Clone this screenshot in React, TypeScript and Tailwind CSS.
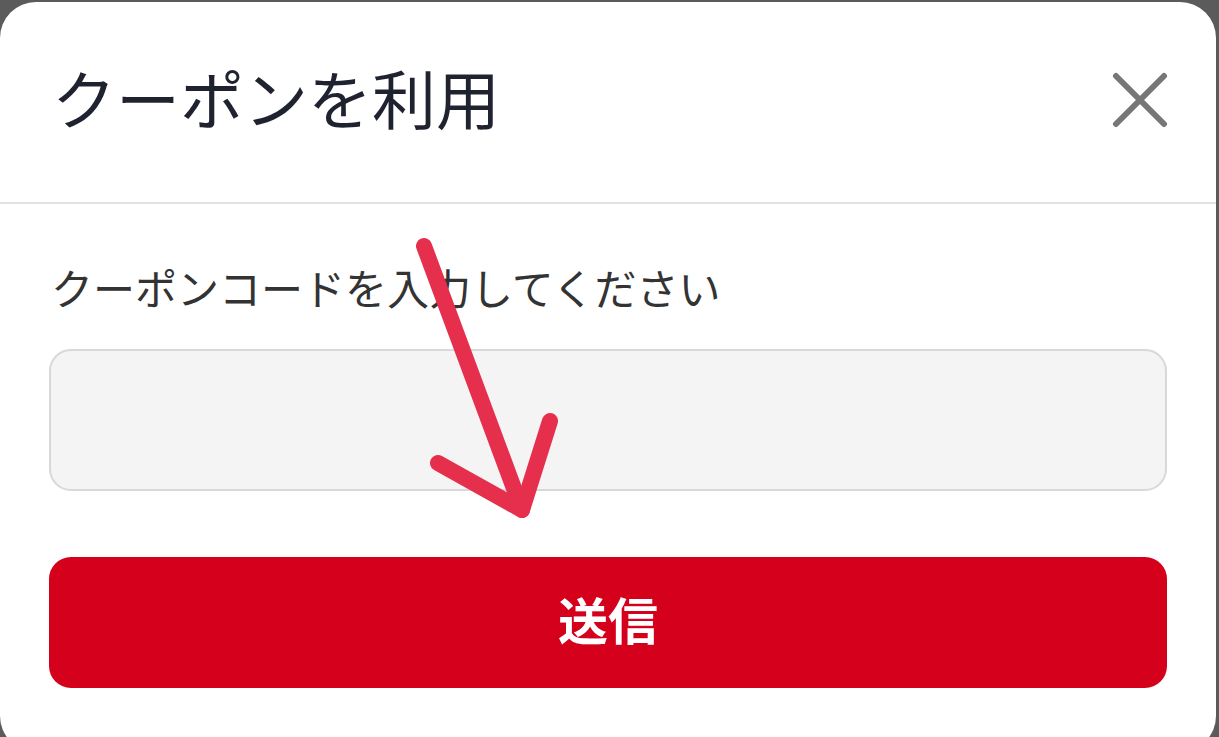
// Coupon dialog — "use coupon" sheet with an annotation arrow
import React from 'react';

const font = { fontFamily: '"Noto Sans CJK JP", "Noto Sans", sans-serif' };

const CloseIcon: React.FC = () => (
  <svg width="56" height="56" viewBox="0 0 56 56" aria-hidden="true">
    <path
      d="M4 4 L52 52 M52 4 L4 52"
      stroke="#777777"
      strokeWidth="6"
      strokeLinecap="round"
      fill="none"
    />
  </svg>
);

const Arrow: React.FC = () => (
  <svg
    className="absolute left-0 top-0 pointer-events-none"
    width="1219"
    height="737"
    viewBox="0 0 1219 737"
    aria-hidden="true"
  >
    <g stroke="#e52f4c" strokeWidth="16" strokeLinecap="round" strokeLinejoin="round" fill="none">
      <path d="M424 246 L522 510" />
      <path d="M438 463 L522 510 L550 421" />
    </g>
  </svg>
);

export default function App() {
  return (
    <div
      className="relative w-[1219px] h-[737px] overflow-hidden bg-[#5b5b5b] pt-[2px] pr-[3px]"
      style={font}
    >
      <div className="h-[750px] rounded-[36px] bg-white flex flex-col">
        <header className="h-[202px] flex items-center justify-between pl-[52px] pr-[48px] border-b-2 border-[#e1e1e3]">
          <h1 className="text-[64px] leading-none font-normal text-[#1f2330] -mt-[12px]">
            クーポンを利用
          </h1>
          <button aria-label="閉じる" className="-mt-[4px]">
            <CloseIcon />
          </button>
        </header>

        <div className="px-[49px] flex flex-col">
          <label className="mt-[61px] pl-[2px] text-[42px] leading-[44px] text-[#333333]">
            クーポンコードを入力してください
          </label>
          <input
            type="text"
            className="mt-[40px] h-[142px] w-full rounded-[22px] border-2 border-[#d8d8d8] bg-[#f4f4f4] outline-none px-6 text-[40px]"
          />
          <button className="mt-[66px] h-[131px] w-full rounded-[22px] bg-[#d5001c] text-white text-[50px] font-bold leading-none pb-[10px]">
            送信
          </button>
        </div>
      </div>
      <Arrow />
    </div>
  );
}
